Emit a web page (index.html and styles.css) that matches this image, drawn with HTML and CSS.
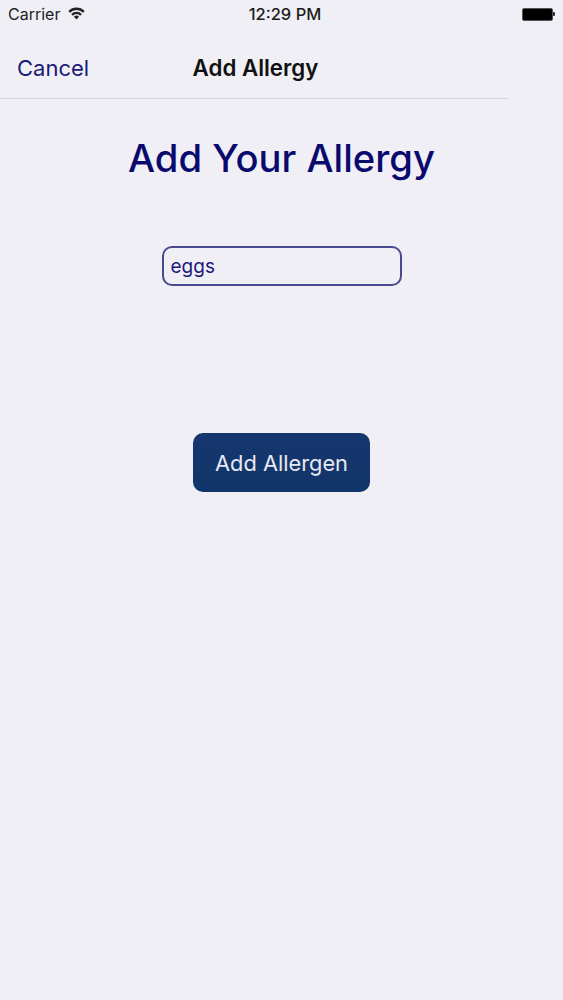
FILE: index.html
```html
<!DOCTYPE html>
<html lang="en">
  <head>
    <meta charset="UTF-8">
    <title>Add Allergy</title>
    <link rel="stylesheet" href="styles.css">
  </head>
  <body>
    <div class="status-bar">
      <div class="status-left">
        <span class="carrier">Carrier</span>
        <svg class="wifi" width="17" height="13" viewBox="0 0 16 12">
          <path d="M0.3 3.6 A11 11 0 0 1 15.7 3.6 L14.2 5.2 A9 9 0 0 0 1.8 5.2 Z" fill="#222"/>
          <path d="M3 6.4 A7.2 7.2 0 0 1 13 6.4 L11.5 8 A5 5 0 0 0 4.5 8 Z" fill="#222"/>
          <path d="M5.6 9 A3.4 3.4 0 0 1 10.4 9 L8 11.6 Z" fill="#222"/>
        </svg>
      </div>
      <span class="clock">12:29 PM</span>
      <div class="battery">
        <div class="battery-body"></div>
        <div class="battery-tip"></div>
      </div>
    </div>

    <div class="nav-bar">
      <a class="nav-cancel">Cancel</a>
      <span class="nav-title">Add Allergy</span>
    </div>

    <div class="content">
      <h1 class="heading">Add Your Allergy</h1>
      <div class="allergy-input">eggs</div>
      <button class="add-button">Add Allergen</button>
    </div>
  </body>
</html>
```

FILE: styles.css
```css
html, body {
  height: 100%;
}

body {
  margin: 0;
  background: #efeff5;
  font-family: "Inter", "Liberation Sans", sans-serif;
  overflow: hidden;
}

.status-bar {
  display: grid;
  grid-template-columns: 1fr auto 1fr;
  align-items: center;
  height: 28px;
  padding: 0 8px;
  color: #222;
  font-size: 16px;
}

.status-left {
  display: flex;
  align-items: center;
  gap: 8px;
}

.wifi {
  margin-top: -2px;
}

.clock {
  margin-left: 7px;
  font-size: 16.5px;
  font-weight: 500;
  color: #1c1c1c;
}

.battery {
  display: flex;
  align-items: center;
  justify-content: flex-end;
}

.battery-body {
  width: 31px;
  height: 13px;
  background: #000;
  border: 1px solid #555;
  border-radius: 2px;
  box-sizing: border-box;
}

.battery-tip {
  width: 2px;
  height: 4px;
  background: #333;
  border-radius: 0 1px 1px 0;
}

.nav-bar {
  position: relative;
  display: flex;
  align-items: center;
  justify-content: center;
  box-sizing: border-box;
  width: 508px;
  height: 71px;
  padding: 9px 0 0 3px;
  border-bottom: 1px solid #d5d5da;
}

.nav-cancel {
  position: absolute;
  left: 17px;
  color: #1c1a78;
  font-size: 22px;
}

.nav-title {
  color: #111;
  font-size: 22.3px;
  font-weight: 600;
}

.content {
  display: flex;
  flex-direction: column;
  align-items: center;
}

.heading {
  margin: 32px 0 0;
  color: #0a0a6e;
  font-size: 38.2px;
  line-height: 54px;
  font-weight: 500;
}

.allergy-input {
  box-sizing: border-box;
  width: 240px;
  height: 40px;
  margin-top: 61px;
  padding: 0 7px;
  border: 2px solid #4a4a8f;
  border-radius: 10px;
  color: #1e1a78;
  font-size: 19px;
  line-height: 38px;
}

.add-button {
  width: 177px;
  height: 59px;
  margin-top: 147px;
  padding: 0;
  border: none;
  border-radius: 10px;
  background: linear-gradient(#17366f, #103568);
  color: #e6e9f2;
  font-family: inherit;
  font-size: 21.8px;
}
```
